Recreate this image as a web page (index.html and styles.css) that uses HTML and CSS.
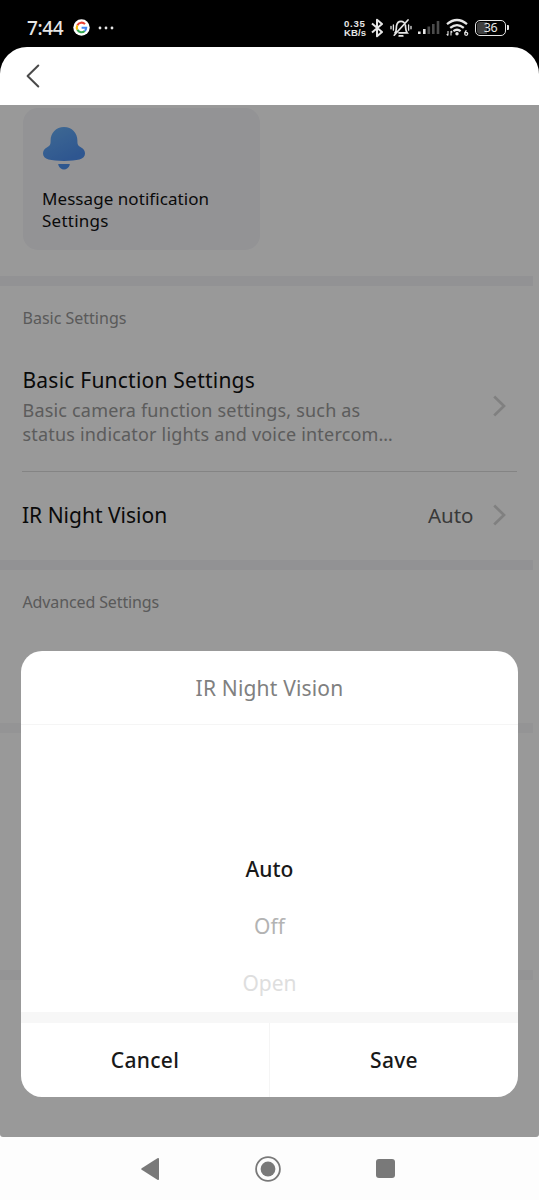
FILE: index.html
```html
<!DOCTYPE html>
<html lang="en">
<head>
<meta charset="utf-8">
<title>Camera settings</title>
<link rel="stylesheet" href="styles.css">
</head>
<body>
<div class="phone">
  <header class="status">
    <div class="status-left">
      <span class="clock">7:44</span>
      <svg class="google" width="17" height="17" viewBox="0 0 17 17" fill="none" stroke-width="2.1">
        <circle cx="8.5" cy="8.5" r="8.2" fill="#fff"/>
        <path d="M12 5.1A4.7 4.7 0 0 0 4.4 6.2" stroke="#e94235"/>
        <path d="M4.4 6.2A4.7 4.7 0 0 0 4.4 10.8" stroke="#fabb05"/>
        <path d="M4.4 10.8A4.7 4.7 0 0 0 11.7 12" stroke="#34a853"/>
        <path d="M11.7 12A4.7 4.7 0 0 0 13.2 8.7H8.6" stroke="#4285f4"/>
      </svg>
      <svg class="dots" width="16" height="4" viewBox="0 0 16 4" fill="#e6e6e6"><circle cx="2" cy="2" r="1.4"/><circle cx="8" cy="2" r="1.4"/><circle cx="14" cy="2" r="1.4"/></svg>
    </div>
    <div class="status-right">
      <div class="speed"><span class="rate">0.35</span><span class="unit">KB/s</span></div>
      <svg class="bt" width="12" height="20" viewBox="0 0 12 20" fill="none" stroke="#e6e6e6" stroke-width="2" stroke-linejoin="round"><path d="M1 5.5L11 14L6 18.3V1.7L11 6L1 14.5"/></svg>
      <svg class="mute" width="22" height="20" viewBox="0 0 22 20" fill="none" stroke="#e6e6e6" stroke-width="1.7" stroke-linecap="round">
        <path d="M5 14.8C6.6 13.2 6.2 10.5 6.5 8C7 5 9 3.3 11 3.3C12 3.3 13 3.7 13.8 4.4M15.4 7.2C15.8 10.3 15.4 12.8 17.1 14.8H9M4.2 17.2L18 2M9.2 17.9H12.8"/>
        <path stroke-width="1.3" d="M3.4 7V12.2M1 8.3V10.8M18.6 7V12.2M21 8.3V10.8"/>
      </svg>
      <svg class="signal" width="22" height="15" viewBox="0 0 22 15"><path d="M0 11.5h2.6V14H0zM5 9h2.6v5H5z" fill="#e6e6e6"/><path d="M9.5 6.5h2.6V14H9.5zM14 4h2.6v10H14zM18.7 1h2.6v13h-2.6z" fill="#4b4b4b"/></svg>
      <svg class="wifi" width="23" height="19" viewBox="0 0 23 19" fill="none" stroke="#e6e6e6" stroke-width="2.2">
        <path d="M1 6.2Q11 -2.2 21 6.2M4.2 9.9Q11 4.2 17.8 9.9M7.4 13.2Q11 10.3 14.6 13.2"/><circle cx="11" cy="15.7" r="1.7" fill="#e6e6e6" stroke="none"/>
        <path d="M2 13v4.5M.7 16.2L2 17.5M5 17.5V13M6.3 14.3L5 13" stroke-width="1.1"/>
        <path d="M20.3 12.2L18.7 15" stroke-width="1.3"/><circle cx="20.2" cy="15.8" r="1.5" stroke-width="1.3"/>
      </svg>
      <div class="battery"><span class="level">36</span></div>
      <i class="nub"></i>
    </div>
  </header>

  <nav class="topbar">
    <svg width="14" height="24" viewBox="0 0 14 24" fill="none" stroke="#4a4a4a" stroke-width="2" stroke-linecap="round" stroke-linejoin="round"><path d="M12.3 1.5L1.6 12L12.3 22.5"/></svg>
  </nav>

  <main class="page">
    <section class="card">
      <svg class="bell" width="42" height="44" viewBox="0 0 42 44">
        <defs><linearGradient id="blue" x1="0" y1="0" x2=".6" y2="1"><stop offset="0" stop-color="#6ab1f6"/><stop offset="1" stop-color="#4d8ff0"/></linearGradient></defs>
        <path fill="url(#blue)" d="M21 1C13 1 7.6 7 7.6 14.5C7.6 18 7.4 19.6 4.2 21.2C1.2 22.8 0 24.8 0 27.6C0 33.5 7.8 35 21 35S42 33.5 42 27.6C42 24.8 40.8 22.8 37.8 21.2C34.6 19.6 34.4 18 34.4 14.5C34.4 7 29 1 21 1Z"/>
        <path fill="#4d92ef" d="M15.8 38H26.2Q27.2 38 26.7 39C25.6 41.8 23.6 43.6 21 43.6S16.4 41.8 15.3 39Q14.8 38 15.8 38Z"/>
      </svg>
      <p class="card-text"><span class="m1">Message notification</span><br><span class="m2">Settings</span></p>
    </section>
    <div class="band"></div>
    <h2 class="group basic">Basic Settings</h2>
    <section class="row tall">
      <div class="copy">
        <h3 class="title t1">Basic Function Settings</h3>
        <p class="desc"><span class="d1">Basic camera function settings, such as</span><br><span class="d2">status indicator lights and voice intercom…</span></p>
      </div>
      <svg class="chev" width="13" height="22" viewBox="0 0 13 22" fill="none" stroke="#d6d6d6" stroke-width="2.7"><path d="M1.2 1.5L11 11L1.2 20.5"/></svg>
    </section>
    <section class="row short">
      <h3 class="title t2">IR Night Vision</h3>
      <span class="value">Auto</span>
      <svg class="chev" width="13" height="22" viewBox="0 0 13 22" fill="none" stroke="#d6d6d6" stroke-width="2.7"><path d="M1.2 1.5L11 11L1.2 20.5"/></svg>
    </section>
    <div class="band"></div>
    <h2 class="group advanced">Advanced Settings</h2>
    <div class="band faint"></div>
    <div class="band faint last"></div>

    <div class="overlay">
      <div class="dialog">
        <div class="dialog-title"><span>IR Night Vision</span></div>
        <div class="picker">
          <span class="opt on">Auto</span>
          <span class="opt off">Off</span>
          <span class="opt open">Open</span>
        </div>
        <div class="actions">
          <div class="btn"><span class="cancel">Cancel</span></div>
          <div class="btn"><span class="save">Save</span></div>
        </div>
      </div>
    </div>
  </main>

  <footer class="keys">
    <svg width="18" height="22" viewBox="0 0 18 22" fill="#797979"><path d="M.7 10.2Q-.3 11 .7 11.8L16.4 21.7Q18 22.5 18 21V1Q18 -.5 16.4 .3Z"/></svg>
    <svg width="26" height="26" viewBox="0 0 26 26"><circle cx="13" cy="13" r="11.9" fill="none" stroke="#797979" stroke-width="1.8"/><circle cx="13" cy="13" r="7.4" fill="#797979"/></svg>
    <svg width="19" height="19" viewBox="0 0 19 19"><rect width="19" height="19" rx="3" fill="#797979"/></svg>
  </footer>
</div>
</body>
</html>
```
FILE: styles.css
```css
* { box-sizing: border-box; }
body { margin: 0; background: #000; font-family: "Noto Sans", sans-serif; }
h2, h3, p { margin: 0; font-weight: 400; }
svg { display: block; flex: none; }
span { white-space: nowrap; }
.phone { width: 539px; height: 1200px; display: flex; flex-direction: column; overflow: hidden; }

.status { height: 47px; display: flex; justify-content: space-between; padding: 0 33px 0 27px; color: #e6e6e6; }
.status-left, .status-right { display: flex; align-items: center; height: 55px; }
.clock { font-size: 19px; font-weight: 500; line-height: 24px; letter-spacing: -.4px; width: 46px; }
.dots { margin-left: 8px; }
.speed { display: flex; flex-direction: column; width: 23px; font-family: "Liberation Sans", sans-serif; font-size: 9.6px; line-height: 9px; font-weight: 700; }
.rate { letter-spacing: .7px; }
.unit { letter-spacing: .1px; }
.bt { margin-left: 4px; }
.mute { margin-left: 7px; }
.signal { margin-left: 6px; }
.wifi { margin-left: 6px; }
.battery { width: 31px; height: 16px; margin-left: 6px; padding: 1px; border: 1.5px solid #e6e6e6; border-radius: 5px; background: linear-gradient(90deg, #404040 36%, #000 36%) content-box; display: flex; align-items: center; justify-content: center; }
.level { font-size: 12.5px; line-height: 12px; letter-spacing: -.3px; }
.nub { width: 2px; height: 5px; margin: 0 -3px 0 1px; background: #e6e6e6; border-radius: 0 1px 1px 0; }

.topbar { height: 58px; background: #fff; border-radius: 27px 27px 0 0; padding: 17px 26px; }

.page { position: relative; height: 1032px; background: #fff; padding-top: 3px; }
.card { width: 237px; height: 142px; margin-left: 23px; margin-bottom: 26px; padding: 18px 19px; border-radius: 15px; background: #f5f5f9; }
.bell { margin-left: 1px; }
.card-text { margin-top: 18px; font-size: 17px; line-height: 21.5px; color: #111; }
.m1 { letter-spacing: .06px; }
.m2 { letter-spacing: .25px; }
.band { width: 533px; height: 10px; background: #f3f3f7; }
.group { height: 60px; padding: 20px 0 0 22.5px; font-size: 16px; line-height: 24px; color: #969696; }
.row { display: flex; align-items: center; margin: 0 22px; padding-right: 11.5px; }
.tall { height: 126px; border-bottom: 1px solid #dcdcdc; width: 495px; padding-bottom: 5px; }
.copy { flex: 1; padding: 0 0 1px .5px; }
.title { font-size: 21px; line-height: 28px; color: #111; }
.t1 { letter-spacing: .22px; }
.desc { margin-top: 4px; font-size: 18px; line-height: 24px; letter-spacing: .19px; color: #999; }
.short { height: 88px; width: 495px; padding-bottom: 2px; }
.short .title { flex: 1; }
.value { margin-right: 19px; font-size: 20.5px; line-height: 28px; color: #606060; }
.advanced { height: 153px; letter-spacing: -.12px; }
.faint { background: #f7f7f8; }
.last { margin-top: 237px; }

.overlay { position: absolute; inset: 0; background: rgba(0, 0, 0, .4); padding: 546.4px 21px 0 21px; border-radius: 0 0 3px 3px; }
.dialog { height: 446px; width: 497px; background: #fff; border-radius: 21px; overflow: hidden; display: flex; flex-direction: column; }
.dialog-title { height: 74px; display: flex; align-items: center; justify-content: center; border-bottom: 1px solid #f5f5f5; font-size: 21px; line-height: 28px; letter-spacing: .18px; color: #808080; }
.picker { height: 287px; display: flex; flex-direction: column; align-items: center; padding-top: 116px; }
.opt { height: 57px; line-height: 57px; font-size: 21px; }
.on { color: #181818; font-weight: 500; }
.off { color: #b3b3b3; }
.open { color: #dedede; }
.actions { flex: 1; border-top: 11px solid #f7f7f7; display: flex; }
.btn { flex: 1; display: flex; align-items: center; justify-content: center; font-size: 21px; line-height: 28px; font-weight: 500; letter-spacing: .3px; color: #181818; }
.btn + .btn { border-left: 1px solid #f5f5f5; }

.keys { height: 63px; background: #fdfdfd; display: flex; align-items: center; padding: 0 0 0 141px; }
.keys svg + svg { margin-left: 96px; }
.keys svg + svg + svg { margin-left: 95px; }
```
